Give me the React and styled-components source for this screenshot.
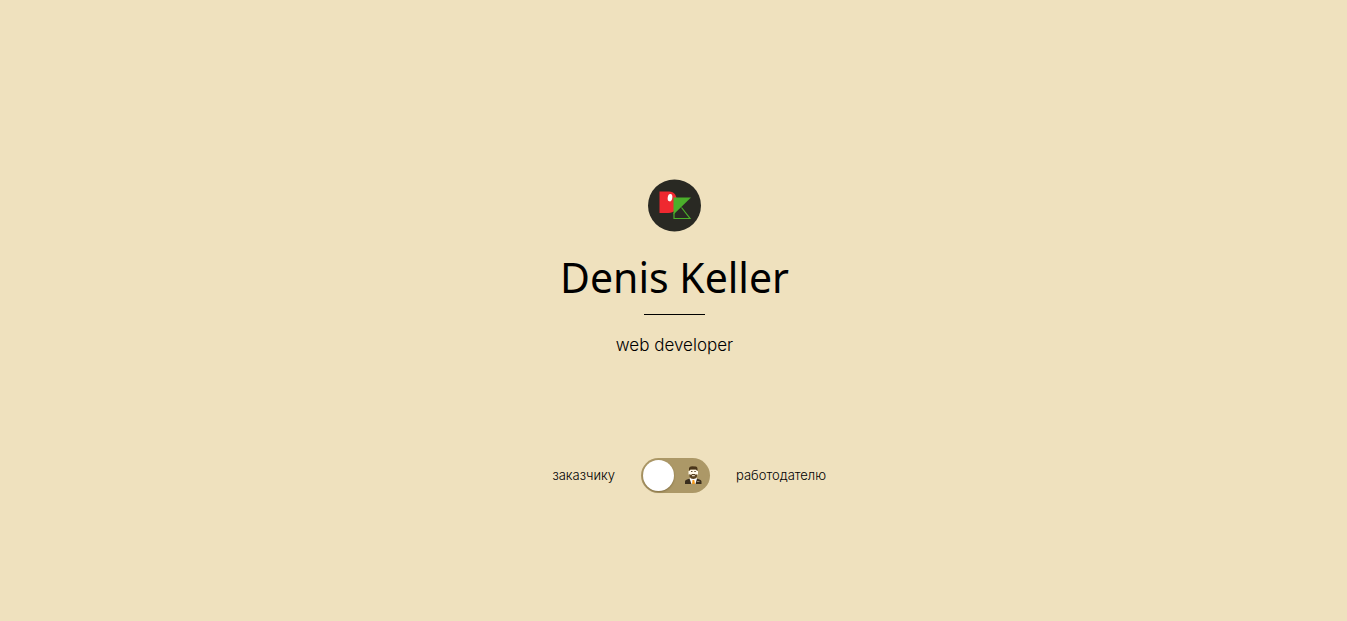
import React, { useState } from "react";
import styled, { createGlobalStyle } from "styled-components";

const GlobalStyle = createGlobalStyle`
  *, *::before, *::after { box-sizing: border-box; }
  body { margin: 0; background: #efe1be; color: #000; }
`;

const Page = styled.main`
  min-height: 100vh;
  padding: 50px 0 0 2px;
  display: flex;
  flex-direction: column;
  align-items: center;
  justify-content: center;
`;

const Logo = styled.svg`
  display: block;
  width: 53px;
  height: 53px;
`;

const Name = styled.h1`
  margin: 15px 0 0;
  font: 400 41px/60px "Noto Sans", "Open Sans", sans-serif;
`;

const Divider = styled.hr`
  width: 61px;
  height: 1px;
  margin: 7px 0 0;
  border: 0;
  background: #000;
`;

const Role = styled.p`
  margin: 18px 0 0;
  font: 300 17px/24px Inter, "Open Sans", sans-serif;
`;

const Audience = styled.div`
  width: 100%;
  margin-top: 101px;
  padding-left: 2px;
  display: grid;
  grid-template-columns: 1fr auto 1fr;
  align-items: center;
  column-gap: 26px;
`;

const AudienceLabel = styled.label`
  justify-self: ${({ $side }) => $side};
  font: 300 13px/20px Inter, "Open Sans", sans-serif;
  cursor: pointer;
`;

const Switch = styled.span`
  position: relative;
  display: block;
  width: 69px;
  height: 35px;
`;

const Track = styled.input`
  appearance: none;
  display: flex;
  align-items: center;
  width: 100%;
  height: 100%;
  margin: 0;
  padding: 0 2px;
  border-radius: 18px;
  background: #ac9867;
  cursor: pointer;

  &::before {
    content: "";
    width: 31px;
    height: 31px;
    border-radius: 50%;
    background: #fff;
    box-shadow: 0 1px 2px rgba(70, 50, 10, 0.4);
    transition: margin 0.2s;
  }

  &:checked::before { margin-left: 34px; }
`;

const Person = styled.svg`
  position: absolute;
  top: 8px;
  left: ${({ $left }) => ($left ? "8px" : "43px")};
  width: 18px;
  height: 18px;
  pointer-events: none;
`;

function Brand() {
  return (
    <Logo viewBox="0 0 53 53" role="img" aria-label="DK">
      <ellipse cx="26.5" cy="26.5" rx="26.5" ry="26" fill="#292923" />
      <path d="M11.5 12.5H21C26.5 12.5 29 17 29 23.500C29 30.500 26 34 20.500 34H11.500Z" fill="#ef2930" />
      <ellipse cx="22" cy="18.700" rx="2.300" ry="3.700" fill="#fff" transform="rotate(8 22 18.700)" />
      <path d="M25.500 18.500H43L25.500 35.500Z" fill="#4baf2b" />
      <path d="M26 34V39.500H42L33.500 28.500" fill="none" stroke="#4baf2b" strokeWidth="1.200" />
    </Logo>
  );
}

export default function App() {
  const [employer, setEmployer] = useState(false);
  return (
    <>
      <GlobalStyle />
      <Page>
        <Brand />
        <Name>Denis Keller</Name>
        <Divider />
        <Role>web developer</Role>
        <Audience>
          <AudienceLabel $side="end" htmlFor="audience">заказчику</AudienceLabel>
          <Switch>
            <Track
              id="audience"
              type="checkbox"
              role="switch"
              checked={employer}
              onChange={(e) => setEmployer(e.target.checked)}
            />
            <Person viewBox="0 0 18 18" $left={employer} aria-hidden="true">
              <path d="M1 18V15.500Q1 14 3 13.500L6 12.500H12.500L15.500 13.500Q17.500 14 17.500 15.500V18Z" fill="#392d1d" />
              <path d="M5.500 12.500L7.500 18H11.500L13 12.500L11.500 11H7Z" fill="#fff" />
              <path d="M8.500 14H10.300L11 18H8Z" fill="#f39a1d" />
              <path d="M5.500 3.500H13V5H14V8.500H13L12 11H6.500L5.500 8.500H4.500V5H5.500Z" fill="#fff8e8" />
              <path d="M5 4.500V2Q5.500 .300 8 .300L12 .500Q13.800 1 13.500 4.500H12.700L12 3.500H6.500L5.700 4.500Z" fill="#49351a" />
              <path d="M5.500 8L7 9L8 8H11L12 9L13 8V10.500Q12 13 9.300 13Q6.500 13 5.500 10.500Z" fill="#5a421f" />
              <path d="M8 9.700H10.800" stroke="#fff8e8" strokeWidth="1" />
              <path d="M7 5.500H8.500M10.300 5.500H11.800" stroke="#49351a" strokeWidth=".900" />
              <path d="M13 15.500H15.500" stroke="#a99c7e" strokeWidth=".800" />
            </Person>
          </Switch>
          <AudienceLabel $side="start" htmlFor="audience">работодателю</AudienceLabel>
        </Audience>
      </Page>
    </>
  );
}
